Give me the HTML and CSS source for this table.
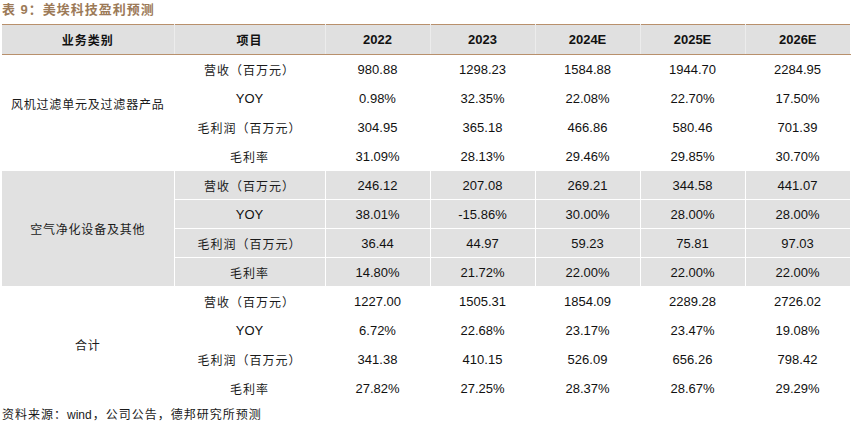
FILE: index.html
```html
<!DOCTYPE html>
<html lang="zh">
<head>
<meta charset="utf-8">
<link rel="stylesheet" href="styles.css">
</head>
<body>
<div class="page">
  <div class="title">表 9：美埃科技盈利预测</div>
  <table class="tbl">
    <colgroup>
      <col class="c-cat"><col class="c-item"><col class="c-num"><col class="c-num"><col class="c-num"><col class="c-num"><col class="c-num">
    </colgroup>
    <thead>
      <tr>
        <th class="cjk">业务类别</th>
        <th class="cjk">项目</th>
        <th>2022</th><th>2023</th><th>2024E</th><th>2025E</th><th>2026E</th>
      </tr>
    </thead>
    <tbody class="grp">
      <tr><td rowspan="4" class="cat cat-up">风机过滤单元及过滤器产品</td><td class="item">营收（百万元）</td><td>980.88</td><td>1298.23</td><td>1584.88</td><td>1944.70</td><td>2284.95</td></tr>
      <tr><td class="lat">YOY</td><td>0.98%</td><td>32.35%</td><td>22.08%</td><td>22.70%</td><td>17.50%</td></tr>
      <tr><td class="item">毛利润（百万元）</td><td>304.95</td><td>365.18</td><td>466.86</td><td>580.46</td><td>701.39</td></tr>
      <tr><td class="item">毛利率</td><td>31.09%</td><td>28.13%</td><td>29.46%</td><td>29.85%</td><td>30.70%</td></tr>
    </tbody>
    <tbody class="grp shade">
      <tr><td rowspan="4" class="cat">空气净化设备及其他</td><td class="item">营收（百万元）</td><td>246.12</td><td>207.08</td><td>269.21</td><td>344.58</td><td>441.07</td></tr>
      <tr><td class="lat">YOY</td><td>38.01%</td><td>-15.86%</td><td>30.00%</td><td>28.00%</td><td>28.00%</td></tr>
      <tr><td class="item">毛利润（百万元）</td><td>36.44</td><td>44.97</td><td>59.23</td><td>75.81</td><td>97.03</td></tr>
      <tr><td class="item">毛利率</td><td>14.80%</td><td>21.72%</td><td>22.00%</td><td>22.00%</td><td>22.00%</td></tr>
    </tbody>
    <tbody class="grp last">
      <tr><td rowspan="4" class="cat">合计</td><td class="item">营收（百万元）</td><td>1227.00</td><td>1505.31</td><td>1854.09</td><td>2289.28</td><td>2726.02</td></tr>
      <tr><td class="lat">YOY</td><td>6.72%</td><td>22.68%</td><td>23.17%</td><td>23.47%</td><td>19.08%</td></tr>
      <tr><td class="item">毛利润（百万元）</td><td>341.38</td><td>410.15</td><td>526.09</td><td>656.26</td><td>798.42</td></tr>
      <tr><td class="item">毛利率</td><td>27.82%</td><td>27.25%</td><td>28.37%</td><td>28.67%</td><td>29.29%</td></tr>
    </tbody>
  </table>
  <div class="source">资料来源：<span class="latin">wind</span>，公司公告，德邦研究所预测</div>
</div>
</body>
</html>
```

FILE: styles.css
```css
html, body {
  margin: 0;
  padding: 0;
  background: #ffffff;
}

.page {
  padding: 0 4px 0 2px;
  font-family: "Liberation Sans", Arial, "Noto Sans CJK SC", sans-serif;
  color: #111;
}

.title {
  height: 24px;
  box-sizing: border-box;
  padding-top: 2px;
  font-family: "Liberation Sans", "Noto Sans CJK SC", sans-serif;
  font-weight: 700;
  font-size: 13px;
  line-height: 16px;
  color: #9c7a58;
  letter-spacing: 1px;
  white-space: nowrap;
}

.tbl {
  width: 848px;
  border-collapse: collapse;
  table-layout: fixed;
  border-top: 1px solid #b8906c;
  border-bottom: 1px solid #b08866;
}

.c-cat { width: 172px; }
.c-item { width: 151px; }
.c-num { width: 105px; }

.tbl th {
  background: #e0e0e0;
  height: 29px;
  padding: 0;
  font-size: 13px;
  font-weight: 700;
  text-align: center;
  vertical-align: middle;
  border-left: 1px solid #ececec;
  border-bottom: 1px solid #b8906c;
  color: #111;
}

.tbl th:first-child { border-left: none; }

.tbl th.cjk {
  font-family: "Noto Sans CJK SC", sans-serif;
  font-size: 12px;
  letter-spacing: 1px;
}

.tbl td {
  height: 28px;
  padding: 0;
  font-size: 13px;
  text-align: center;
  vertical-align: middle;
  border: 1px solid transparent;
  border-top: none;
}

.grp td { border-color: #ffffff; }

.shade td {
  background: #e1e1e1;
}

.tbl td.cat {
  font-family: "Noto Sans CJK SC", sans-serif;
  font-size: 12px;
  letter-spacing: 0.8px;
  color: #1a1a1a;
  border-left: none;
}

.tbl td.cat-up {
  padding-bottom: 18px;
}

.tbl td.item {
  font-family: "Noto Sans CJK SC", sans-serif;
  font-size: 12px;
  letter-spacing: 1px;
  color: #1a1a1a;
}

.tbl td.lat {
  font-size: 13px;
}

.source {
  margin-top: 4px;
  font-family: "Liberation Sans", "Noto Sans CJK SC", sans-serif;
  font-size: 12px;
  line-height: 16px;
  letter-spacing: 1px;
  color: #1a1a1a;
}

.source .latin {
  letter-spacing: 0;
  margin-right: 1px;
}
```
